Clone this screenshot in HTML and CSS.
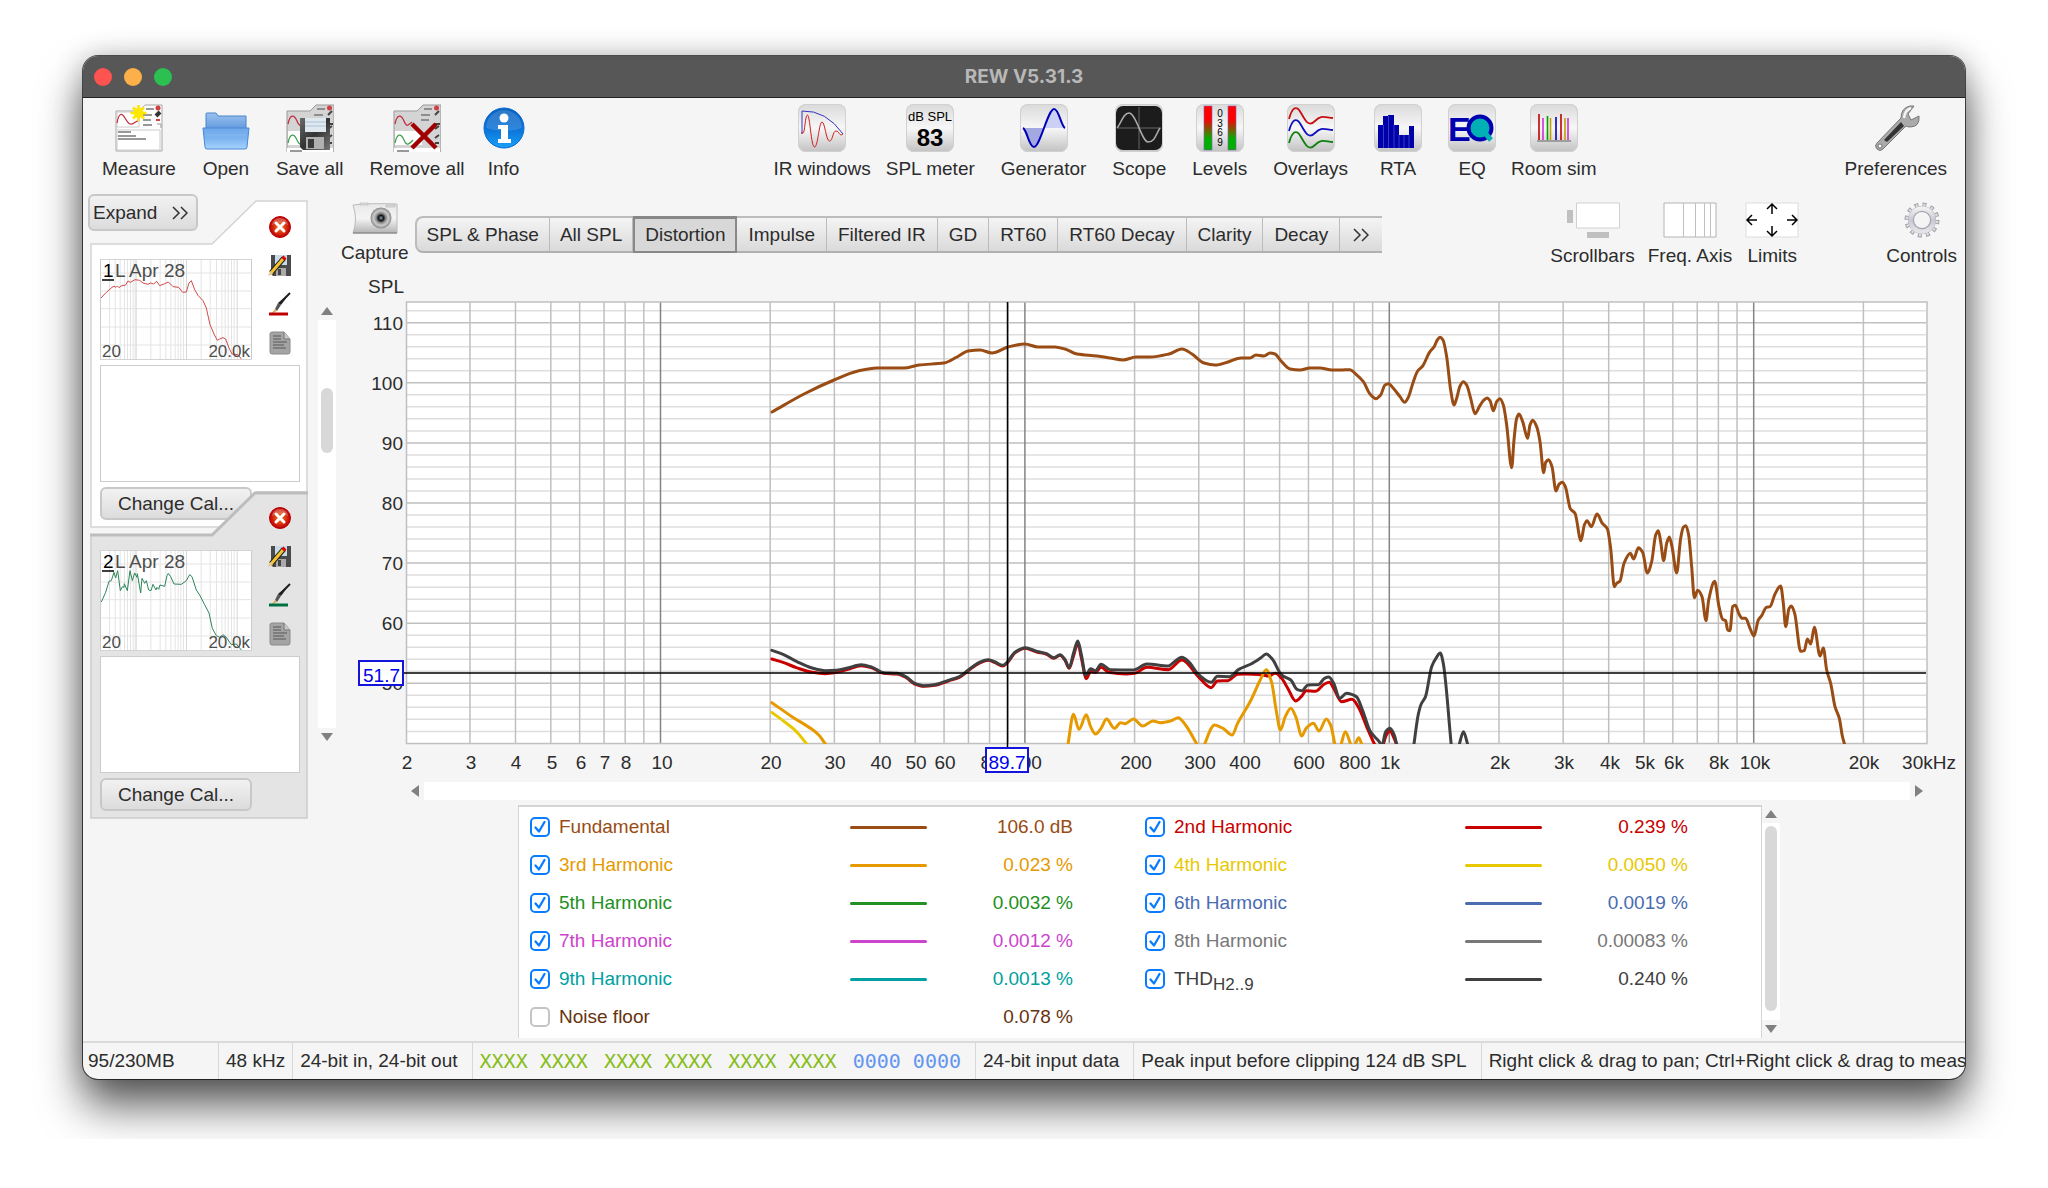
FILE: index.html
```html
<!DOCTYPE html>
<html lang="en">
<head>
<meta charset="utf-8">
<title>REW V5.31.3</title>
<link rel="stylesheet" href="styles.css">
</head>
<body>
<svg class="defs" aria-hidden="true">
  <defs>
    <linearGradient id="folder" x1="0" y1="0" x2="0" y2="1"><stop offset="0" stop-color="#6fa8e8"/><stop offset=".5" stop-color="#7db4f0"/><stop offset="1" stop-color="#a6d2ff"/></linearGradient>
    <linearGradient id="folderBack" x1="0" y1="0" x2="0" y2="1"><stop offset="0" stop-color="#9cc3f0"/><stop offset="1" stop-color="#5f97dc"/></linearGradient>
    <linearGradient id="info" x1="0" y1="0" x2="0" y2="1"><stop offset="0" stop-color="#0a62c0"/><stop offset=".5" stop-color="#0a70d4"/><stop offset="1" stop-color="#1aa0f8"/></linearGradient>
    <linearGradient id="metal" x1="0" y1="0" x2="1" y2="1"><stop offset="0" stop-color="#6a6a6a"/><stop offset=".5" stop-color="#333"/><stop offset="1" stop-color="#777"/></linearGradient>
    <linearGradient id="level" x1="0" y1="0" x2="0" y2="1"><stop offset="0" stop-color="#f00"/><stop offset=".3" stop-color="#f00"/><stop offset=".75" stop-color="#00b000"/><stop offset="1" stop-color="#00b000"/></linearGradient>
    <linearGradient id="cam" x1="0" y1="0" x2="0" y2="1"><stop offset="0" stop-color="#e8e8e8"/><stop offset=".5" stop-color="#f4f4f4"/><stop offset="1" stop-color="#b4b4b4"/></linearGradient>
    <linearGradient id="gear" x1="0" y1="0" x2="0" y2="1"><stop offset="0" stop-color="#f0f0f0"/><stop offset=".5" stop-color="#c8c8d4"/><stop offset="1" stop-color="#e4e4e8"/></linearGradient>
    <radialGradient id="lens"><stop offset="0" stop-color="#8a9ac0"/><stop offset=".25" stop-color="#111"/><stop offset=".45" stop-color="#888"/><stop offset=".7" stop-color="#ccc"/><stop offset="1" stop-color="#888"/></radialGradient>
    <radialGradient id="close"><stop offset="0" stop-color="#f08020"/><stop offset=".6" stop-color="#d83010"/><stop offset="1" stop-color="#b80008"/></radialGradient>
    <symbol id="i-close" viewBox="0 0 22 22"><circle cx="11" cy="11" r="10.5" fill="url(#close)" stroke="#b00"/><path d="M3 9a8 7 0 0 1 16 0q-8-4-16 0" fill="#fff" opacity=".25"/><path d="M7 7l8 8M15 7l-8 8" stroke="#fff" stroke-width="3" stroke-linecap="round"/></symbol>
    <symbol id="i-save" viewBox="0 0 24 24"><path d="M3 2h20v21H5l-2-2z" fill="#4a4a4a"/><path d="M7 2h12v10H7z" fill="#c8dbe8"/><path d="M8 15h10v8H8z" fill="#aaa"/><path d="M10 16h3v6h-3z" fill="#444"/><path d="M3 20L16 5" stroke="#222" stroke-width="5"/><path d="M3 20L15 6" stroke="#f4c430" stroke-width="3"/><path d="M15 6l2-2" stroke="#e00" stroke-width="4"/><path d="M0 23l2-5 3 3z" fill="#e8c890"/></symbol>
    <symbol id="i-note" viewBox="0 0 22 24"><path d="M3 1h12l6 7v13q0 2-2 2H3q-2 0-2-2V3q0-2 2-2z" fill="#a4a4a4" stroke="#8a8a8a"/><path d="M15 1v7h6" fill="#c8c8c8" stroke="#777"/><path d="M4 5h8M4 8h8M4 11h14M4 14h11M4 17h13" stroke="#707070" stroke-width="1.5"/></symbol>
    <symbol id="i-brush" viewBox="0 0 24 24"><path d="M22 1L13 13l-3-2z" fill="#222"/><path d="M22 1L11 12" stroke="#222" stroke-width="2"/><path d="M10 11l3 2-4 6-2-2z" fill="#555"/><path d="M7 17l2 2-6 3z" fill="#d8b060"/><path d="M1 22h19" stroke="currentColor" stroke-width="3"/></symbol>
    <symbol id="i-next" viewBox="0 0 16 14"><path d="M1 1l6 6-6 6M9 1l6 6-6 6" fill="none" stroke="#333" stroke-width="1.5"/></symbol>
    <symbol id="i-up" viewBox="0 0 12 8"><path d="M0 8l6-8 6 8z" fill="#808080"/></symbol>
    <symbol id="i-down" viewBox="0 0 12 8"><path d="M0 0l6 8 6-8z" fill="#808080"/></symbol>
    <symbol id="i-list" viewBox="0 0 48 48"><path d="M1 7h23l6-6h18v47H1z" fill="#d4d4d4" stroke="#999"/><path d="M2 27h27v14H2z" fill="#fff"/><path d="M2 20c2-10 6-10 9-3s4 4 8 1" fill="none" stroke="#c03040" stroke-width="1.3"/><path d="M2 39c2-10 6-10 9-3s5 4 9 0" fill="none" stroke="#40a050" stroke-width="1.3"/><path d="M1 44h46v4H1z" fill="#fff"/><path d="M31 5h8M28 11h9M28 16h8M4 47h12" stroke="#777" stroke-width="1.5"/><circle cx="43.500" cy="4" r="2.500" fill="#d04040"/><path d="M42 11l4-4M42 20h5M42 25l4-3M42 34l4-3M42 39h4" stroke="#444" stroke-width="2"/></symbol>
    <symbol id="i-thumbgrid" viewBox="0 0 455 303">
      <path d="M28 0v303M45 0v303M60 0v303M73 0v303M82 0v303M91 0v303M99 0v303M105 0v303M152 0v303M180 0v303M197 0v303M212 0v303M225 0v303M234 0v303M242 0v303M250 0v303M303 0v303M330 0v303M349 0v303M365 0v303M375 0v303M384 0v303M394 0v303M402 0v303M0 42h455M0 96h455M0 149h455M0 204h455M0 258h455" stroke="#e4e4e4" stroke-width="3"/>
      <path d="M108 0v303M259 0v303M411 0v303" stroke="#d8d8d8" stroke-width="3"/>
      <path d="M1 1h453v301H1z" fill="none" stroke="#ccc" stroke-width="3"/>
    </symbol>
  </defs>
</svg>

<main class="window">
  <header class="titlebar">
    <div class="lights"><button class="light red" aria-label="Close"></button><button class="light amber" aria-label="Minimise"></button><button class="light green" aria-label="Zoom"></button></div>
    <h1>REW V5.31.3</h1>
  </header>

  <nav class="toolbar">
    <div class="group">
      <button class="tool"><svg class="icon" viewBox="0 0 48 48"><path d="M1 7h23l6-6h17v46H1z" fill="#fdfdfd" stroke="#a8a8a8"/><path d="M2 8h22v15H2zM2 26h43v20H2z" fill="#fff" stroke="#ccc"/><path d="M2 19C4 8 7 9 10 14s5 8 9 5l5-3" fill="none" stroke="#c03040" stroke-width="1.3"/><path d="M31 5h8M28 11h9M28 16h8M28 21h9M3 28h13M3 32h18M3 35h28" stroke="#777" stroke-width="1.5"/><circle cx="43" cy="4" r="2.500" fill="#d04040"/><path d="M41 12l4-4" stroke="#333" stroke-width="4"/><path d="M41 16h4" stroke="#c00" stroke-width="1.500"/><path d="M42 20h4v4" stroke="#999" fill="none"/><path d="M23.500 1v16M15.500 9h16M18 3.500l11 11M29 3.500l-11 11" stroke="#ffe600" stroke-width="2.500"/><circle cx="23.500" cy="9" r="5" fill="#ffe800"/></svg>Measure</button>
      <button class="tool"><svg class="icon" viewBox="0 0 48 48"><path d="M4 10q0-1 1-1h9l2 3h28v14H4z" fill="url(#folderBack)" stroke="#4a82cc"/><path d="M1 24h46l-2 19q0 2-2 2H5q-2 0-2-2z" fill="url(#folder)" stroke="#4a86d8"/><path d="M4 31h40" stroke="#90c0f4" opacity=".5"/></svg>Open</button>
      <button class="tool"><svg class="icon" viewBox="0 0 48 48"><use href="#i-list"/><path d="M14 14h30v32H17l-3-3z" fill="url(#metal)"/><path d="M19 14h21v14H19z" fill="#dfe8ee"/><path d="M19 18h21M19 22h21" stroke="#a9c4d8"/><path d="M20 33h18v12H20z" fill="#b0b0b0"/><path d="M22 35h6v9h-6z" fill="#3a3a3a"/></svg>Save all</button>
      <div class="group tight">
        <button class="tool"><svg class="icon" viewBox="0 0 48 48"><use href="#i-list"/><path d="M19 20l24 24M43 20L19 44" stroke="#a00000" stroke-width="4.500"/></svg>Remove all</button>
        <button class="tool"><svg class="icon" viewBox="0 0 48 48"><circle cx="24" cy="24" r="20" fill="url(#info)" stroke="#0a6cd0"/><path d="M6 24a18 18 0 0 1 36 0q-18 6-36 0" fill="#fff" opacity=".15"/><circle cx="24" cy="14" r="4.500" fill="#fff"/><path d="M18 21h10v14h3v4H18v-4h3V25h-3z" fill="#fff"/></svg>Info</button>
      </div>
    </div>
    <div class="group center">
      <div class="group tight">
        <button class="tool"><svg class="icon box" viewBox="0 0 48 48"><path d="M4 30V7Q28 6 45 30" fill="none" stroke="#3434c0"/><path d="M3 29h2C7 29 7 11 9.500 11S13 43 16.500 43 21 18 24 18s4 19 7.500 19 3-10 6.500-10 3 6 7 3" fill="none" stroke="#d02020"/></svg>IR windows</button>
        <button class="tool"><svg class="icon box" viewBox="0 0 48 48"><text x="24" y="17" text-anchor="middle" font-size="13">dB SPL</text><text x="24" y="42" text-anchor="middle" font-size="24" font-weight="bold">83</text></svg>SPL meter</button>
      </div>
      <button class="tool"><svg class="icon box" viewBox="0 0 48 48"><path d="M3 24C7 24 9 43 14 43S20 33 24 24z" fill="#a4a8e0"/><path d="M24 24C28 15 29 5 34 5S40 22 45 24z" fill="#ccd0f4"/><path d="M3 24C7 26 9 43 14 43 20 43 28 5 34 5 39 5 41 22 45 24" fill="none" stroke="#0000b8" stroke-width="2"/></svg>Generator</button>
      <button class="tool"><svg class="icon box" viewBox="0 0 48 48"><rect x="1" y="2" width="46" height="44" rx="7" fill="#1c1c1c"/><path d="M2 24h44M24 3v42" stroke="#666"/><path d="M2 24C6 20 8 9 14 9c7 0 13 29 19 29 7 0 8-8 12-14" fill="none" stroke="#aaa" stroke-width="1.500"/></svg>Scope</button>
      <button class="tool"><svg class="icon box" viewBox="0 0 48 48"><path d="M8 2h8v44H8zM32 2h8v44h-8z" fill="url(#level)" stroke="#8060c0" stroke-width=".6"/><g font-size="10" text-anchor="middle"><text x="24" y="13">0</text><text x="24" y="23">3</text><text x="24" y="32">6</text><text x="24" y="42">9</text></g></svg>Levels</button>
      <button class="tool"><svg class="icon box" viewBox="0 0 48 48"><g fill="none" stroke-width="1.800"><path d="M2 15C5 4 9 0 14 9s8 14 14 8 8-4 18-3" stroke="#c81010"/><path d="M2 27C5 16 9 12 14 21s8 14 14 8 8-4 18-3" stroke="#1010c0"/><path d="M2 39C5 28 9 24 14 33s8 14 14 8 8-4 18-3" stroke="#108010"/></g></svg>Overlays</button>
      <button class="tool"><svg class="icon box" viewBox="0 0 48 48"><path d="M4 44V21h5V12h5v-1h6v10h5v10h10v-9h5v22z" fill="#0000a8"/><path d="M9.500 21v23M14.500 12v32M20 21v23M25 31v13M30 31v13M35 31v13" stroke="#4848d0" stroke-width=".8"/></svg>RTA</button>
      <div class="group tight">
        <button class="tool"><svg class="icon box" viewBox="0 0 48 48"><text class="navy" x="0" y="37" font-size="34" font-weight="bold">E</text><circle cx="32" cy="24" r="11.500" fill="#00b0b4" stroke="#0000b0" stroke-width="4"/><path d="M37 29l6 7" stroke="#00b0b4" stroke-width="5"/></svg>EQ</button>
        <button class="tool"><svg class="icon box" viewBox="0 0 48 48"><path d="M7 37h34" stroke="#888" stroke-width="1.500"/><g stroke-width="1.600"><path d="M9 10v26M31 10v26" stroke="#c00000"/><path d="M13 14v22M38 14v22" stroke="#d030d0"/><path d="M17.500 12v24" stroke="#00a000"/><path d="M20.500 14v22M35 14v22" stroke="#c0a000"/><path d="M26 13v23" stroke="#0000b0"/></g></svg>Room sim</button>
      </div>
    </div>
    <div class="group">
      <button class="tool"><svg class="icon" viewBox="0 0 48 48"><path d="M5 39L29 14q0-10 9-12l4 0-6 8 3 6 8-4q1 11-9 11-2 0-4-1L11 45q-3 3-6 0t0-6z" fill="#aaa" stroke="#777"/><path d="M12 36L29 18l3 4-17 16z" fill="#333"/><path d="M32 14q1-8 7-10" stroke="#f4f4f4" stroke-width="2.500" fill="none"/><circle cx="8" cy="42" r="2" fill="#fff" stroke="#777"/></svg>Preferences</button>
    </div>
  </nav>

  <div class="body">
    <aside class="sidebar">
      <button class="push expand">Expand <svg width="16" height="14"><use href="#i-next"/></svg></button>
      <article class="card">
        <svg class="shape" viewBox="0 0 218 328" preserveAspectRatio="none"><path d="M1 327V44h121l44-43h51v326z" fill="#fff" stroke="#d4d4d4" stroke-width="1.500"/></svg>
        <svg class="thumb" viewBox="0 0 152 101"><use href="#i-thumbgrid" width="152" height="101"/>
          <g transform="scale(.3333) translate(-61 -203)"><path d="M64 320L80 303 97 288 103 285 109 288 113 284 118 289 124 284 138 281 145 269 152 273 166 265 180 267 190 275 205 279 212 275 222 278 231 270 240 283 255 277 266 272 280 286 297 288 309 303 320 302 328 275 335 268 345 295 355 312 370 328 380 350 391 400 404 430 413 447 420 443 430 439 438 443 448 470 457 488 475 490 485 503" fill="none" stroke="#d04848" stroke-width="3" stroke-linejoin="round"/></g>
          <text x="3" y="18" class="key">1</text><path d="M2 21h12" stroke="#000" stroke-width="1.500"/><text x="15" y="18">L Apr 28</text><text class="small" x="2" y="98">20</text><text class="small" x="150" y="98" text-anchor="end">20.0k</text></svg>
        <div class="actions">
          <button aria-label="Remove measurement 1"><svg width="22" height="22"><use href="#i-close"/></svg></button>
          <button aria-label="Save measurement 1"><svg width="24" height="24"><use href="#i-save"/></svg></button>
          <button aria-label="Trace colour 1" class="crimson"><svg width="24" height="24"><use href="#i-brush"/></svg></button>
          <button aria-label="Notes 1"><svg width="22" height="24"><use href="#i-note"/></svg></button>
        </div>
        <textarea aria-label="Notes for measurement 1"></textarea>
        <button class="push cal">Change Cal...</button>
      </article>
      <article class="card selected">
        <svg class="shape" viewBox="0 0 218 328" preserveAspectRatio="none"><path d="M1 327V44h121l44-43h51v326z" fill="#e4e4e4" stroke="#ccc" stroke-width="1.500"/><path d="M0 44h122l43-42h53" fill="none" stroke="#bdbdbd" stroke-width="3"/></svg>
        <svg class="thumb" viewBox="0 0 152 101"><use href="#i-thumbgrid" width="152" height="101"/>
          <g transform="scale(.3333) translate(-61 -208)"><path d="M65 364L78 335 88 302 95 300 103 275 108 292 114 270 122 330 128 318 133 320 134 309 143 330 151 270 158 300 165 277 172 290 173 279 183 337 187 293 192 302 195 308 200 300 207 328 214 330 220 311 229 328 232 320 237 326 241 313 255 317 262 285 266 278 273 288 283 310 305 311 320 300 330 282 337 288 350 328 360 343 375 372 388 397 398 443 410 465 420 470 430 462 440 470 455 492 470 490 485 508" fill="none" stroke="#2c8458" stroke-width="3" stroke-linejoin="round"/></g>
          <text x="3" y="18" class="key">2</text><path d="M2 21h12" stroke="#000" stroke-width="1.500"/><text x="15" y="18">L Apr 28</text><text class="small" x="2" y="98">20</text><text class="small" x="150" y="98" text-anchor="end">20.0k</text></svg>
        <div class="actions">
          <button aria-label="Remove measurement 2"><svg width="22" height="22"><use href="#i-close"/></svg></button>
          <button aria-label="Save measurement 2"><svg width="24" height="24"><use href="#i-save"/></svg></button>
          <button aria-label="Trace colour 2" class="forest"><svg width="24" height="24"><use href="#i-brush"/></svg></button>
          <button aria-label="Notes 2"><svg width="22" height="24"><use href="#i-note"/></svg></button>
        </div>
        <textarea aria-label="Notes for measurement 2"></textarea>
        <button class="push cal">Change Cal...</button>
      </article>
    </aside>

    <section class="content">
      <div class="graphbar">
        <button class="tool capture"><svg width="46" height="32" viewBox="0 0 46 32"><path d="M1 3q14-2 44-1v29H1q5-14 0-28z" fill="url(#cam)" stroke="#bbb"/><path d="M1 31h44" stroke="#777"/><path d="M8 1h8v2H8zM34 3h9v2h-9z" fill="#ddd" stroke="#aaa" stroke-width=".5"/><circle cx="29" cy="16" r="10.500" fill="url(#lens)"/></svg>Capture</button>
        <div class="tabs" role="tablist">
          <button role="tab">SPL &amp; Phase</button><button role="tab">All SPL</button><button role="tab" class="active" aria-selected="true">Distortion</button><button role="tab">Impulse</button><button role="tab">Filtered IR</button><button role="tab">GD</button><button role="tab">RT60</button><button role="tab">RT60 Decay</button><button role="tab">Clarity</button><button role="tab">Decay</button><button role="tab" class="more" aria-label="More graphs"><svg width="16" height="14"><use href="#i-next"/></svg></button>
        </div>
        <div class="options">
          <button class="tool"><svg width="54" height="36" viewBox="0 0 54 36"><path d="M1 8h6v13H1zM21 30h22v6H21z" fill="#c0c0c0"/><path d="M10.500 1h43v25h-43z" fill="#fff" stroke="#d0d0d0"/></svg>Scrollbars</button>
          <button class="tool"><svg width="54" height="36" viewBox="0 0 54 36"><path d="M1 1h52v34H1z" fill="#fff" stroke="#b4b4b4"/><path d="M20.500 1v34M32.500 1v34M41.500 1v34M47.500 1v34" stroke="#c0c0c0"/></svg>Freq. Axis</button>
          <button class="tool"><svg width="54" height="36" viewBox="0 0 54 36"><path d="M1 1h52v34H1z" fill="#fff" stroke="#ddd"/><path d="M12 18H2m5-5l-5 5 5 5M42 18h10m-5-5l5 5-5 5M27 12V2m-5 5l5-5 5 5M27 24v10m-5-5l5 5 5-5" fill="none" stroke="#000" stroke-width="1.500"/></svg>Limits</button>
        </div>
        <button class="tool"><svg width="36" height="36" viewBox="0 0 36 36"><circle cx="18" cy="18" r="15.500" fill="none" stroke="#a0a0a8" stroke-width="4" stroke-dasharray="4 4.116"/><circle cx="18" cy="18" r="15" fill="none" stroke="#e0e0e4" stroke-width="3" stroke-dasharray="2 5.854" stroke-dashoffset="-1"/><circle cx="18" cy="18" r="11" fill="#f4f4f4" stroke="#a4a4b0" stroke-width="6"/><circle cx="18" cy="18" r="11.500" fill="none" stroke="url(#gear)" stroke-width="4.500"/></svg>Controls</button>
      </div>

      <div class="graph">
        <div class="vscroll"><svg width="12" height="8"><use href="#i-up"/></svg><div class="track"><div class="grip"></div></div><svg width="12" height="8"><use href="#i-down"/></svg></div>
        <svg class="plot" viewBox="336 272 1629 506" role="img" aria-label="Distortion plot">
          <defs><clipPath id="area"><rect x="406" y="302" width="1521" height="442"/></clipPath></defs>
          <rect x="406" y="302" width="1521" height="442" fill="#fff"/>
          <path id="grid-minor" class="minor"/><path id="grid-major" class="major"/><path id="grid-decade" class="decade"/>
          <rect class="major" x="406.500" y="302" width="1520.500" height="441.500"/>
          <g id="traces" clip-path="url(#area)"></g>
          <g id="labels"></g>
          <text x="404" y="293" text-anchor="end">SPL</text>
          <path d="M404 673H1926M1007.500 302V748" stroke="#000" stroke-width="1.500"/>
          <g class="readout"><rect x="359" y="661" width="44" height="24"/><text x="400" y="682" text-anchor="end">51.7</text><rect x="986" y="748" width="42" height="24"/><text x="1007" y="769" text-anchor="middle">89.7</text></g>
        </svg>
      </div>

      <div class="hscroll"><svg width="8" height="12" viewBox="0 0 8 12"><path d="M8 0L0 6l8 6z" fill="#808080"/></svg><div class="track"></div><svg width="8" height="12" viewBox="0 0 8 12"><path d="M0 0l8 6-8 6z" fill="#808080"/></svg></div>

      <div class="legendwrap">
        <div class="legend">
          <label class="row brown"><input type="checkbox" checked><span>Fundamental</span><i></i><output>106.0 dB</output></label>
          <label class="row red2"><input type="checkbox" checked><span>2nd Harmonic</span><i></i><output>0.239 %</output></label>
          <label class="row orange"><input type="checkbox" checked><span>3rd Harmonic</span><i></i><output>0.023 %</output></label>
          <label class="row yellow"><input type="checkbox" checked><span>4th Harmonic</span><i></i><output>0.0050 %</output></label>
          <label class="row green5"><input type="checkbox" checked><span>5th Harmonic</span><i></i><output>0.0032 %</output></label>
          <label class="row blue"><input type="checkbox" checked><span>6th Harmonic</span><i></i><output>0.0019 %</output></label>
          <label class="row magenta"><input type="checkbox" checked><span>7th Harmonic</span><i></i><output>0.0012 %</output></label>
          <label class="row grey"><input type="checkbox" checked><span>8th Harmonic</span><i></i><output>0.00083 %</output></label>
          <label class="row teal"><input type="checkbox" checked><span>9th Harmonic</span><i></i><output>0.0013 %</output></label>
          <label class="row dark"><input type="checkbox" checked><span>THD<sub>H2..9</sub></span><i></i><output>0.240 %</output></label>
          <label class="row umber"><input type="checkbox"><span>Noise floor</span><b></b><output>0.078 %</output></label>
        </div>
        <div class="vscroll"><svg width="12" height="8"><use href="#i-up"/></svg><div class="track"><div class="grip"></div></div><svg width="12" height="8"><use href="#i-down"/></svg></div>
      </div>
    </section>
  </div>

  <footer class="status">
    <span class="memory">95/230MB</span><span>48 kHz</span><span class="wide">24-bit in, 24-bit out</span>
    <span class="bits"><code>XXXX XXXX</code><code>XXXX XXXX</code><code>XXXX XXXX</code><code class="zero">0000 0000</code></span>
    <span class="wide">24-bit input data</span><span class="wide">Peak input before clipping 124 dB SPL</span><span class="hint">Right click &amp; drag to pan; Ctrl+Right click &amp; drag to measure</span>
  </footer>
</main>
<script src="chart.js"></script>
</body>
</html>
```

FILE: styles.css
```css
* { box-sizing: border-box; }
body {
  margin: 0;
  padding: 56px 83px 60px;
  background: #fff;
  color: #2c2c2c;
  font: 19px/22px "Liberation Sans", Arial, sans-serif;
}
button { font: inherit; color: inherit; border: 0; background: none; padding: 0; }
svg { display: block; flex: none; }
.defs { position: absolute; width: 0; height: 0; }

.window {
  display: flex;
  flex-direction: column;
  overflow: hidden;
  border-radius: 15px;
  background: #f5f5f5;
  box-shadow: 0 0 0 1px rgba(0, 0, 0, .65), 0 27px 44px rgba(0, 0, 0, .64), 0 0 28px rgba(0, 0, 0, .22);
}

.titlebar {
  display: grid;
  grid-template-columns: 1fr auto 1fr;
  align-items: center;
  height: 42px;
  padding: 0 11px;
  background: #575757;
  border-bottom: 1px solid #222;
}
.titlebar h1 { margin: 0; font: 700 19px/22px Inter, sans-serif; color: #b8b8b8; }
.lights { display: flex; gap: 12px; }
.light { width: 18px; height: 18px; border-radius: 50%; }
.red { background: #ff5350; }
.amber { background: #fdb04a; }
.green { background: #2cc051; }

.toolbar { display: flex; justify-content: space-between; padding: 6px 18px 0 19px; height: 87px; }
.group { display: flex; gap: 26px; }
.tight { gap: 15px; }
.center { margin: 0 auto 0 246px; }
.tool { display: flex; flex-direction: column; align-items: center; gap: 6px; white-space: nowrap; }
.icon { width: 48px; height: 48px; }
.box { border-radius: 8px; background: linear-gradient(#dadada, #f7f7f7 50%, #c2c2c2); box-shadow: inset 0 0 0 1px #d0d0d0; }
.navy { fill: #0000b0; }

.push {
  border: 2px solid #c8c8c8;
  border-radius: 6px;
  background: linear-gradient(#f2f2f2, #dcdcdc);
}

.body { display: flex; }
.sidebar { width: 227px; flex: none; padding: 9px 0 0 5px; }
.expand { display: flex; align-items: center; justify-content: space-between; width: 110px; height: 37px; padding: 0 8px 0 3px; }
.card {
  position: relative;
  display: grid;
  grid-template-columns: 152px 1fr;
  grid-template-rows: 160px 117px 33px;
  row-gap: 5px;
  width: 218px;
  height: 328px;
  margin: -31px 0 0 2px;
  padding: 0 7px 0 10px;
}
.card.selected { margin-top: -37px; }
.shape { position: absolute; inset: 0; width: 100%; height: 100%; }
.thumb { position: relative; align-self: end; width: 152px; height: 101px; background: #fff; fill: #4d4d4d; }
.key { fill: #000; }
.small { font-size: 17px; }
.actions { position: relative; display: flex; flex-direction: column; align-items: center; gap: 15px; padding: 16px 0 0 7px; }
.crimson { color: #c00000; }
.forest { color: #007040; }
textarea { position: relative; grid-column: 1 / 3; width: 200px; height: 117px; border: 1px solid #ccc; background: #fff; resize: none; font: inherit; }
.cal { z-index: 0; width: 152px; }

.content { flex: 1; min-width: 0; }
.graphbar { display: flex; align-items: flex-start; height: 87px; padding: 17px 8px 0 31px; }
.graphbar .tool { gap: 7px; }
.graphbar .capture { gap: 8px; }
.tabs { display: flex; height: 37px; margin: 14px 0 0 6px; border: 2px solid #bcbcbc; border-right: 0; border-bottom-color: #b0b0b0; border-radius: 8px 0 0 8px; background: linear-gradient(#f4f4f4, #dadada); }
.tabs button { padding: 0 10px; border-right: 1px solid #bcbcbc; white-space: nowrap; }
.tabs .active { margin: -2px 0; border: 2px solid #888; border-width: 3px 2px 2px 2px; background: #d8d8d8; }
.tabs .active ~ button { padding: 0 11px; }
.tabs .active ~ .more { padding: 0 13px; border: 0; }
.options { display: flex; gap: 13px; margin: 0 87px 0 auto; }

.graph { display: flex; padding-left: 8px; }
.graph .vscroll { padding: 35px 0 37px; }
.vscroll { display: flex; flex-direction: column; align-items: center; gap: 5px; width: 18px; flex: none; }
.track { flex: 1; background: #fff; }
.vscroll .track { width: 18px; padding: 3px; }
.grip { width: 12px; height: 65px; border-radius: 6px; background: #d8d8d8; }
.graph .grip { margin-top: 65px; }
.plot { flex: 1; min-width: 0; height: auto; fill: #2c2c2c; }
.minor, .major, .decade { fill: none; stroke: #dedede; stroke-width: 1.5; }
.major { stroke: #c0c0c0; }
.decade { stroke: #848484; }
.trace { fill: none; stroke-width: 3; stroke-linejoin: round; stroke-linecap: round; }
.readout { fill: #0000ee; }
.readout rect { fill: #fff; stroke: #1414dc; stroke-width: 2; }
.hscroll { display: flex; align-items: center; gap: 5px; height: 18px; margin: 4px 42px 0 101px; }
.hscroll .track { align-self: stretch; }

.legendwrap { display: flex; margin: 5px 185px 3px 208px; }
.legend {
  flex: 1;
  display: grid;
  grid-template-columns: 1fr 1fr;
  grid-auto-rows: 38px;
  column-gap: 72px;
  padding: 1px 73px 2px 11px;
  border: 1px solid #d4d4d4;
  border-width: 2px 1px 0;
  background: #fff;
}
.row { display: grid; grid-template-columns: 20px 1fr 77px 146px; align-items: center; }
.row span { padding-left: 9px; }
.row i { height: 3px; border-radius: 2px; background: currentColor; }
.row output { text-align: right; }
.row sub { font-size: 17px; line-height: 0; }
input[type="checkbox"] { appearance: none; width: 20px; height: 20px; margin: 0; border: 2px solid #c4c4c4; border-radius: 5px; background: #fff; }
input[type="checkbox"]:checked {
  border-color: #0a7cff;
  background: url("data:image/svg+xml,%3Csvg xmlns='http://www.w3.org/2000/svg' viewBox='0 0 16 16'%3E%3Cpath d='M3.500 8.500l3.500 4 5.500-9.500' fill='none' stroke='%230a7cff' stroke-width='2.300' stroke-linecap='round' stroke-linejoin='round'/%3E%3C/svg%3E") center / 16px;
}
.brown { color: #994c14; }
.red2 { color: #c80000; }
.orange { color: #e69a00; }
.yellow { color: #e8c800; }
.green5 { color: #229022; }
.blue { color: #4a6cb0; }
.magenta { color: #cc44cc; }
.grey { color: #787878; }
.teal { color: #00a0a0; }
.dark { color: #404040; }
.umber { color: #663310; }
.legendwrap .vscroll { padding: 5px 0; }
.legendwrap .grip { height: 185px; }

.status { display: flex; height: 38px; border-top: 2px solid #dadada; white-space: nowrap; overflow: hidden; }
.status > span { flex: none; padding: 7px 7px 0; border-right: 1px solid #d8d8d8; }
.status > .memory { width: 136px; padding-left: 5px; }
.status > .wide { padding-right: 14px; }
.status > .hint { flex: 1; min-width: 0; overflow: hidden; border: 0; padding-right: 0; }
.status > .bits { display: flex; gap: 16px; padding-right: 14px; }
code { font: 20px/22px "DejaVu Sans Mono", monospace; color: #86bc18; }
.zero { color: #6496f0; }
```

FILE: chart.js
```js
const SVG = "http://www.w3.org/2000/svg";
const DECADE = 364.4;
const freqX = f => 660.5 + DECADE * Math.log10(f / 10);
const levelY = db => 322.7 + (110 - db) * 6.01;

let minor = "", major = "", decade = "";
for (let db = 42; db <= 112; db += 2) {
  const line = `M407 ${levelY(db)}H1926`;
  if (db % 10) minor += line; else major += line;
}
for (let p = 0; p < 5; p++) {
  for (let n = 1; n < 10; n++) {
    const f = n * 10 ** p;
    if (f <= 2 || f >= 30000) continue;
    const line = `M${freqX(f)} 302V744`;
    if (n === 1) decade += line; else major += line;
  }
}
document.getElementById("grid-minor").setAttribute("d", minor);
document.getElementById("grid-major").setAttribute("d", major);
document.getElementById("grid-decade").setAttribute("d", decade);

const labels = document.getElementById("labels");
function label(text, x, y, anchor) {
  const el = document.createElementNS(SVG, "text");
  el.textContent = text;
  el.setAttribute("x", x);
  el.setAttribute("y", y);
  el.setAttribute("text-anchor", anchor);
  labels.append(el);
}
for (let db = 50; db <= 110; db += 10) label(db, 403, Math.round(levelY(db)) + 7, "end");
for (const f of [2, 3, 4, 5, 6, 7, 8, 10, 20, 30, 40, 50, 60, 80, 100, 200, 300, 400, 600, 800, 1000, 2000, 3000, 4000, 5000, 6000, 8000, 10000, 20000, 30000]) {
  const text = f === 30000 ? "30kHz" : f >= 1000 ? f / 1000 + "k" : f;
  label(text, Math.round(freqX(f)) + 1, 769, "middle");
}

// Sample grids: origin and step of the integer pairs that follow.
const FULL = [0, 0, 1, 1];
const LOW = [350, 620, 1 / 2.24, 1 / 3];
const MID = [1000, 620, 960 / 1568, 1 / 3];
const HIGH = [1340, 300, 1 / 3, 1 / 3];

function expand([x0, y0, sx, sy], list) {
  const n = list.trim().split(/[\s,]+/).map(Number), out = [];
  for (let i = 0; i < n.length; i += 2) out.push([x0 + n[i] * sx, y0 + n[i + 1] * sy]);
  return out;
}
// Monotone cubic interpolation, so peaks are not overshot.
function curve(p) {
  const s = [], m = [];
  for (let i = 0; i < p.length - 1; i++) s.push((p[i + 1][1] - p[i][1]) / (p[i + 1][0] - p[i][0]));
  for (let i = 0; i < p.length; i++) {
    const a = s[i - 1], b = s[i];
    m.push(a === undefined ? b : b === undefined ? a : a * b <= 0 ? 0 : 2 * a * b / (a + b));
  }
  let d = `M${p[0]}`;
  for (let i = 0; i < p.length - 1; i++) {
    const h = (p[i + 1][0] - p[i][0]) / 3;
    d += `C${p[i][0] + h} ${p[i][1] + h * m[i]} ${p[i + 1][0] - h} ${p[i + 1][1] - h * m[i + 1]} ${p[i + 1]}`;
  }
  return d;
}
function trace(cls, ...parts) {
  const points = parts.flatMap(([grid, list]) => expand(grid, list));
  const el = document.createElementNS(SVG, "path");
  el.setAttribute("class", "trace " + cls);
  el.setAttribute("stroke", "currentColor");
  el.setAttribute("d", curve(points));
  document.getElementById("traces").append(el);
}

trace("brown",
  [FULL, "772,412 804,394 834,380 858,371 877,368 904,368 919,365 944,363 957,357 968,351 980,350 992,353 1008,347 1025,344 1038,347 1055,347 1065,349 1077,354 1097,356 1110,358 1123,360 1136,357 1150,357 1169,354 1182,349 1192,354 1204,363 1215,365 1228,362 1241,358 1250,358 1256,355 1264,356 1270,353 1275,354 1281,361 1290,369 1300,370 1310,368 1320,368 1332,370"],
  [HIGH, "2,210 30,209 45,220 70,245 90,282 108,296 122,285 135,255 146,251 160,265 180,290 194,307 205,292 220,245 233,213 248,198 268,158 283,139 292,120 300,112 309,120 320,170 332,270 342,315 350,295 360,258 370,245 380,255 392,295 405,341 418,320 430,302 441,294 450,302 460,332 470,305 480,296 490,315 500,375 515,503 522,420 530,355 537,342 548,365 563,415 570,375 578,361 590,380 600,425 611,518 617,487 626,479 636,500 648,573 657,553 667,547 676,560 691,626 705,640 723,722 733,675 741,662 754,680 771,642 787,670 802,686 812,745 823,860 830,850 840,843 852,790 871,760 881,777 895,743 908,757 922,819 935,785 947,705 955,692 962,725 971,782 980,730 988,711 996,740 1010,819 1022,715 1030,682 1038,677 1046,705 1055,800 1063,893 1073,871 1086,890 1098,962 1106,900 1124,844 1137,920 1148,958 1157,962 1163,990 1170,992 1178,920 1186,916 1197,942 1207,955 1217,955 1230,985 1242,1008 1255,960 1265,947 1279,922 1290,920 1305,882 1322,858 1330,910 1337,980 1347,926 1354,918 1364,940 1382,1054 1393,1052 1402,1017 1412,1032 1423,982 1440,1068 1450,1044 1460,1110 1472,1150 1485,1220 1498,1255 1507,1308 1514,1334"]);

trace("red2",
  [LOW, "945,117 970,127 1000,143 1035,157 1065,161 1090,157 1115,148 1145,137 1170,144 1195,160 1225,162 1245,172 1265,192 1285,199 1310,196 1340,183 1365,172 1385,152 1410,129 1430,121 1445,128 1462,138 1473,127 1490,98"],
  [MID, "41,85 60,96 75,102 88,115 98,106 106,120 113,145 120,108 127,70 133,115 141,176 148,154 156,157 165,142 178,157 205,162 220,160 240,142 275,149 297,120 325,172 345,203 355,183 372,182 388,163 400,162 430,165 438,168 450,160 460,175 470,205 483,243 492,230 500,212 515,214 530,192 538,187 545,205 558,245 575,238 585,260 600,325 612,374"]);
trace("red2", [MID, "626,374 631,345 637,332 643,352 648,374"]);
trace("orange", [LOW, "945,248 990,290 1035,328 1050,345 1066,374"]);
trace("orange", [MID, "111,374 120,283 129,328 141,284 148,320 156,342 165,325 174,297 187,325 197,308 204,311 218,297 233,318 250,303 262,308 280,302 291,293 303,315 322,374"]);
trace("orange", [MID, "334,374 345,325 350,315 365,326 379,345 388,310 410,240 425,180 435,149 444,190 451,270 458,330 466,290 475,265 483,290 493,348 500,325 512,310 521,333 533,297 540,315 547,374"]);
trace("orange", [MID, "557,374 564,335 573,374"]);
trace("orange", [MID, "580,374 586,353 591,374"]);
trace("yellow", [LOW, "945,277 975,307 995,328 1010,350 1024,374"]);
trace("dark",
  [LOW, "945,91 970,103 1000,124 1035,144 1065,152 1090,151 1115,144 1145,134 1170,142 1195,158 1225,160 1245,170 1265,190 1285,197 1310,194 1340,181 1365,170 1385,150 1410,127 1430,119 1445,126 1462,136 1473,125 1490,96"],
  [MID, "41,83 60,94 75,100 88,113 98,104 106,118 113,143 120,100 127,63 133,105 140,165 148,146 156,152 165,133 180,149 218,150 240,132 275,138 285,125 297,112 308,125 325,165 345,187 355,169 375,170 390,148 410,132 425,115 435,102 445,118 460,165 475,180 485,208 493,212 503,195 520,194 530,175 537,171 545,190 555,235 566,220 582,230 592,270 605,335 618,362 623,374"]);
trace("dark", [MID, "625,374 630,335 637,325 644,345 648,374"]);
trace("dark", [MID, "676,374 683,285 688,252 695,230 705,140 713,112 719,99 724,130 737,374"]);
trace("dark", [MID, "750,374 757,335 764,374"]);
```
